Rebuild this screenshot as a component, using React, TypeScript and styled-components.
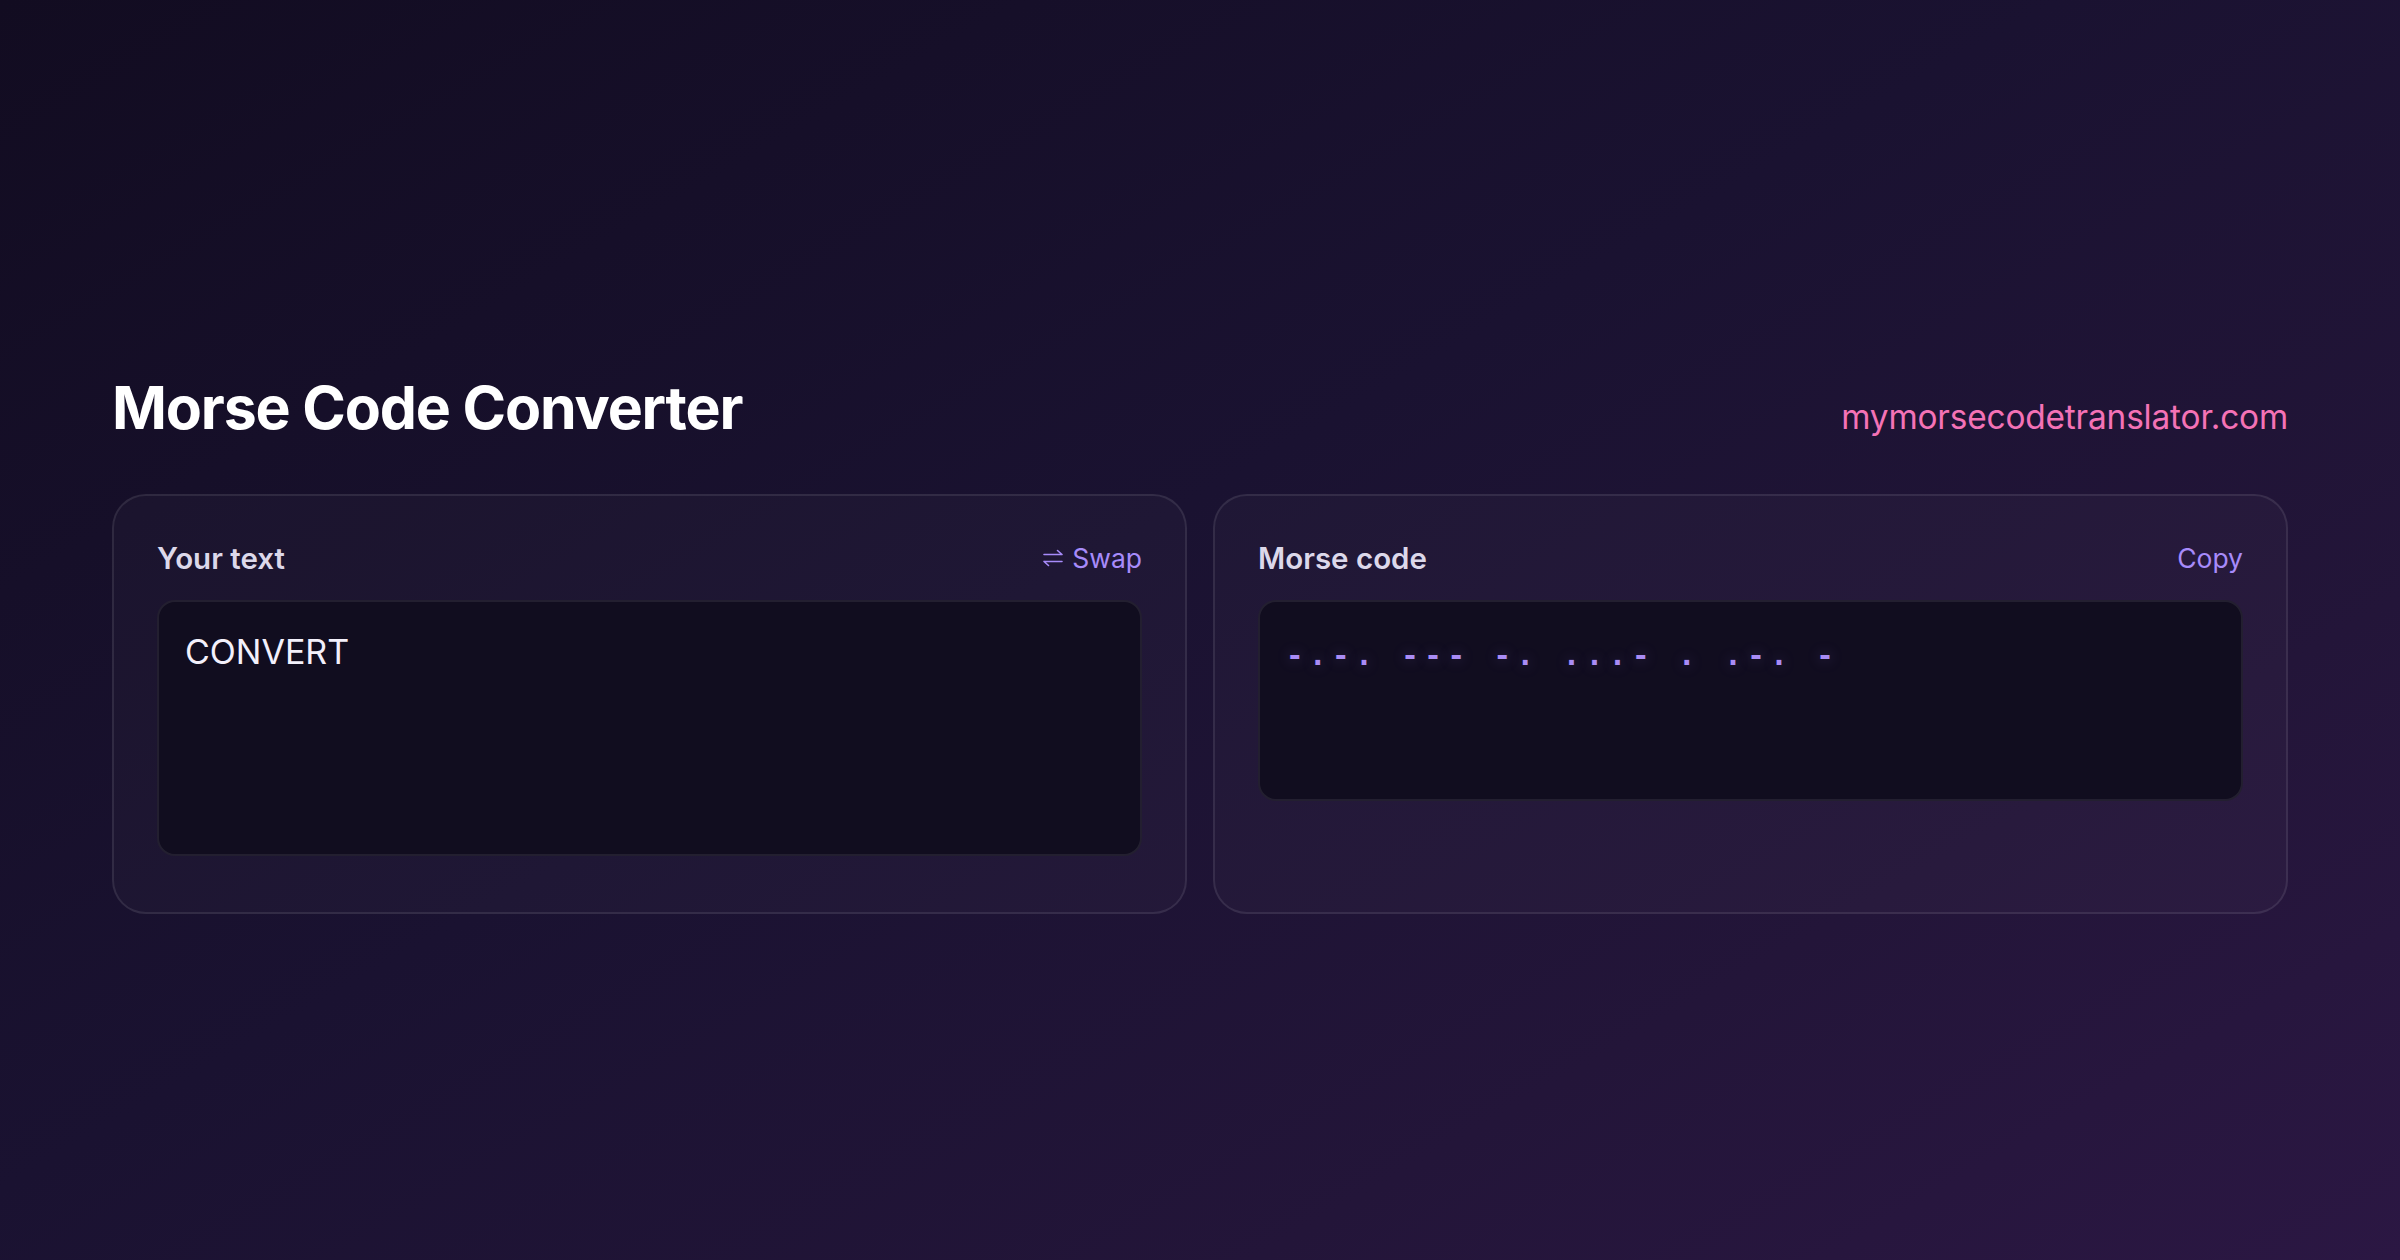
import React, { useMemo, useState } from 'react';
import styled, { createGlobalStyle } from 'styled-components';

const MORSE: Record<string, string> = {
  A: '.-', B: '-...', C: '-.-.', D: '-..', E: '.', F: '..-.', G: '--.',
  H: '....', I: '..', J: '.---', K: '-.-', L: '.-..', M: '--', N: '-.',
  O: '---', P: '.--.', Q: '--.-', R: '.-.', S: '...', T: '-', U: '..-',
  V: '...-', W: '.--', X: '-..-', Y: '-.--', Z: '--..',
  '0': '-----', '1': '.----', '2': '..---', '3': '...--', '4': '....-',
  '5': '.....', '6': '-....', '7': '--...', '8': '---..', '9': '----.',
};

function toMorse(text: string) {
  return text
    .toUpperCase()
    .split('')
    .map(ch => (ch === ' ' ? '/' : MORSE[ch] || ''))
    .filter(Boolean)
    .join(' ');
}

const GlobalStyle = createGlobalStyle`
  html, body {
    margin: 0;
    padding: 0;
    background: #140e26;
  }
  body {
    font-family: Inter, "Noto Sans", sans-serif;
    -webkit-font-smoothing: antialiased;
  }
  * {
    box-sizing: border-box;
  }
`;

const Page = styled.main`
  min-height: 100vh;
  display: flex;
  align-items: center;
  padding: 27px 112px 0;
  background: linear-gradient(150deg, #120c21 0%, #1a1231 45%, #231539 75%, #2b1743 100%);
`;

const Container = styled.div`
  width: 100%;
  display: flex;
  flex-direction: column;
  gap: 50px;
`;

const Header = styled.header`
  display: flex;
  justify-content: space-between;
  align-items: baseline;
`;

const Title = styled.h1`
  margin: 0;
  font-size: 59px;
  line-height: 1.2;
  font-weight: 700;
  letter-spacing: -0.02em;
  color: #ffffff;
`;

const Domain = styled.a`
  font-size: 33.4px;
  font-weight: 400;
  color: #f472b6;
  text-decoration: none;
  letter-spacing: -0.005em;
`;

const Panels = styled.section`
  display: grid;
  grid-template-columns: 1fr 1fr;
  gap: 26px;
`;

const Card = styled.div`
  display: flex;
  flex-direction: column;
  gap: 20px;
  padding: 40px 43px 56px;
  border-radius: 34px;
  border: 2px solid rgba(255, 255, 255, 0.09);
  background: rgba(255, 255, 255, 0.025);
`;

const CardHead = styled.div`
  display: flex;
  justify-content: space-between;
  align-items: center;
  height: 44px;
`;

const Label = styled.label`
  font-size: 29.5px;
  font-weight: 600;
  color: #dcd8ea;
`;

const Action = styled.button`
  display: inline-flex;
  align-items: center;
  gap: 8px;
  padding: 0;
  border: none;
  background: none;
  cursor: pointer;
  font-family: inherit;
  font-size: 26.5px;
  font-weight: 400;
  color: #a78bfa;
`;

const Field = styled.textarea`
  display: block;
  width: 100%;
  height: 256px;
  resize: none;
  padding: 24px 26px;
  border-radius: 18px;
  border: 2px solid rgba(255, 255, 255, 0.08);
  background: #110d1f;
  outline: none;
  font-family: Inter, "Noto Sans", sans-serif;
  font-size: 34px;
  line-height: 1.5;
  color: #f3f0fb;
`;

const Output = styled.div`
  min-height: 201px;
  padding: 30px 26px 24px;
  border-radius: 18px;
  border: 2px solid rgba(255, 255, 255, 0.08);
  background: #110d1f;
  font-family: "DejaVu Sans Mono", "Liberation Mono", monospace;
  font-size: 29px;
  font-weight: 700;
  line-height: 1.6;
  letter-spacing: 5.6px;
  color: #a98cf5;
  text-shadow: 0 0 14px rgba(167, 139, 250, 0.35);
  word-break: break-word;
`;

function SwapIcon() {
  return (
    <svg width="22" height="18" viewBox="0 0 22 18" fill="none" stroke="currentColor" strokeWidth="1.6" strokeLinecap="round" strokeLinejoin="round">
      <path d="M2 5.5h18M15.5 1.5l4.5 4" />
      <path d="M20 12.5H2M6.5 16.5L2 12.5" />
    </svg>
  );
}

export default function App() {
  const [text, setText] = useState('CONVERT');
  const morse = useMemo(() => toMorse(text), [text]);

  return (
    <>
      <GlobalStyle />
      <Page>
        <Container>
          <Header>
            <Title>Morse Code Converter</Title>
            <Domain href="#">mymorsecodetranslator.com</Domain>
          </Header>
          <Panels>
            <Card>
              <CardHead>
                <Label htmlFor="source">Your text</Label>
                <Action type="button">
                  <SwapIcon />
                  Swap
                </Action>
              </CardHead>
              <Field
                id="source"
                value={text}
                onChange={e => setText(e.target.value)}
                spellCheck={false}
              />
            </Card>
            <Card>
              <CardHead>
                <Label>Morse code</Label>
                <Action
                  type="button"
                  onClick={() => navigator.clipboard?.writeText(morse)}
                >
                  Copy
                </Action>
              </CardHead>
              <Output>{morse}</Output>
            </Card>
          </Panels>
        </Container>
      </Page>
    </>
  );
}
